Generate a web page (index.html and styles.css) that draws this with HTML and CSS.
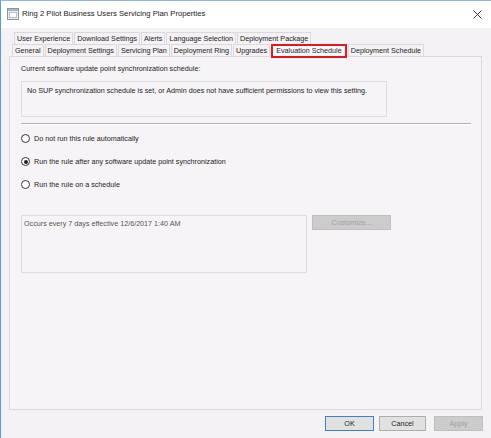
FILE: index.html
```html
<!DOCTYPE html>
<html>
<head>
<meta charset="utf-8">
<link rel="stylesheet" href="styles.css">
</head>
<body>
<div class="window">
  <div class="titlebar">
    <svg class="appicon" width="12" height="12" viewBox="0 0 12 12">
      <rect x="0.5" y="0.5" width="11" height="11" fill="#e8eef3" stroke="#8a96a0"/>
      <rect x="1" y="1" width="10" height="2" fill="#9fb7c9"/>
      <rect x="2.5" y="4.5" width="7" height="5" fill="#ffffff" stroke="#b8c2ca"/>
    </svg>
    <span class="title">Ring 2 Pilot Business Users Servicing Plan Properties</span>
    <svg class="close" width="9" height="9" viewBox="0 0 9 9">
      <path d="M0.5 0.5 L8.5 8.5 M8.5 0.5 L0.5 8.5" stroke="#333" stroke-width="1" fill="none"/>
    </svg>
  </div>
  <div class="content">
    <div class="tabs">
      <div class="tabrow row1">
        <span class="tab">User Experience</span>
        <span class="tab">Download Settings</span>
        <span class="tab">Alerts</span>
        <span class="tab">Language Selection</span>
        <span class="tab">Deployment Package</span>
      </div>
      <div class="tabrow row2">
        <span class="tab">General</span>
        <span class="tab">Deployment Settings</span>
        <span class="tab">Servicing Plan</span>
        <span class="tab">Deployment Ring</span>
        <span class="tab">Upgrades</span>
        <span class="tab active">Evaluation Schedule</span>
        <span class="tab">Deployment Schedule</span>
      </div>
    </div>
    <div class="panel">
      <div class="label">Current software update point synchronization schedule:</div>
      <div class="infobox">No SUP synchronization schedule is set, or Admin does not have sufficient permissions to view this setting.</div>
      <div class="separator"></div>
      <div class="radios">
        <div class="radio"><span class="circle"></span><span>Do not run this rule automatically</span></div>
        <div class="radio"><span class="circle checked"></span><span>Run the rule after any software update point synchronization</span></div>
        <div class="radio"><span class="circle"></span><span>Run the rule on a schedule</span></div>
      </div>
      <div class="schedule">
        <div class="schedbox">Occurs every 7 days effective 12/6/2017 1:40 AM</div>
        <div class="btn disabled customize">Customize...</div>
      </div>
    </div>
    <div class="footer">
      <div class="btn default">OK</div>
      <div class="btn">Cancel</div>
      <div class="btn disabled">Apply</div>
    </div>
  </div>
</div>
</body>
</html>
```

FILE: styles.css
```css
* { box-sizing: border-box; }
html, body {
  margin: 0;
  padding: 0;
  width: 491px;
  height: 438px;
  overflow: hidden;
  background: #f5f2f5;
  font-family: "Liberation Sans", Arial, sans-serif;
  font-size: 7.2px;
  color: #222;
}
.window {
  width: 491px;
  height: 438px;
  border-left: 1px solid #5a9ad6;
  border-top: 1px solid #8fb6de;
  display: flex;
  flex-direction: column;
}
.titlebar {
  height: 27px;
  background: #ffffff;
  display: flex;
  align-items: center;
  padding-left: 6px;
  padding-right: 8px;
  flex-shrink: 0;
}
.appicon { margin-right: 3px; margin-top: -2px; }
.title {
  font-size: 7.7px;
  color: #1a1a1a;
  flex: 1;
  margin-top: -2px;
}
.close { margin-right: 1px; }
.content {
  flex: 1;
  display: flex;
  flex-direction: column;
  padding: 4px 8px 0 8px;
}
.tabs {
  display: flex;
  flex-direction: column;
}
.tabrow {
  display: flex;
  height: 12px;
}
.row1 { padding-left: 5px; }
.row2 { padding-left: 3px; }
.tab {
  padding: 0 2px;
  line-height: 11px;
  border: 1px solid #dcd9dc;
  border-bottom: none;
  white-space: nowrap;
  margin-right: 1px;
  background: #f5f2f5;
}
.tab.active {
  border: 2px solid #e0181f;
  background: #fbf9fb;
  height: 14px;
  line-height: 10px;
  padding: 0 3px;
  position: relative;
  z-index: 2;
}
.panel {
  height: 354px;
  border: 1px solid #dcd9dc;
  background: #f7f4f7;
  padding: 5px 11px 0 11px;
  display: flex;
  flex-direction: column;
  margin-right: 1px;
}
.label {
  line-height: 12px;
  margin-top: 1px;
}
.infobox {
  margin-top: 6px;
  width: 366px;
  height: 36px;
  border: 1px solid #e0dde0;
  padding: 4px 5px;
  line-height: 10px;
}
.separator {
  margin-top: 6px;
  width: 450px;
  height: 2px;
  border-top: 1px solid #b4b1b4;
  border-bottom: 1px solid #ffffff;
}
.radios {
  margin-top: 8px;
  display: flex;
  flex-direction: column;
  gap: 12px;
}
.radio {
  display: flex;
  align-items: center;
  height: 11px;
  line-height: 11px;
}
.circle {
  width: 9px;
  height: 9px;
  border: 1px solid #333;
  border-radius: 50%;
  background: #fff;
  margin-right: 4px;
  position: relative;
  flex-shrink: 0;
}
.circle.checked::after {
  content: "";
  position: absolute;
  left: 1.5px;
  top: 1.5px;
  width: 4px;
  height: 4px;
  border-radius: 50%;
  background: #222;
}
.schedule {
  margin-top: 25px;
  display: flex;
  align-items: flex-start;
  gap: 5px;
}
.schedbox {
  width: 286px;
  height: 58px;
  border: 1px solid #e0dde0;
  padding: 3px 2px;
  line-height: 10px;
  color: #555;
}
.btn {
  height: 15px;
  border: 1px solid #adadad;
  background: #e1e1e1;
  display: flex;
  align-items: center;
  justify-content: center;
  line-height: 12px;
  color: #222;
}
.btn.disabled {
  background: #cccccc;
  border-color: #bfbfbf;
  color: #a0a0a0;
}
.customize { width: 79px; }
.footer {
  display: flex;
  justify-content: flex-end;
  gap: 5px;
  margin-top: 6px;
}
.footer .btn { width: 49px; }
.footer .btn:nth-child(2) { width: 47px; margin-right: 3px; }
.btn.default { border-color: #3c80d2; }
```
